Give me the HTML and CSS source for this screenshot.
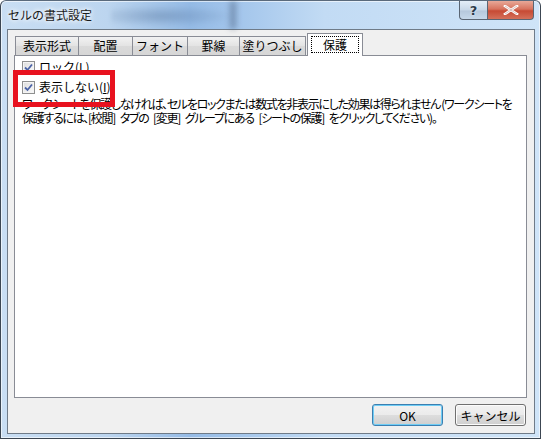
FILE: index.html
```html
<!DOCTYPE html>
<html lang="ja">
<head>
<meta charset="utf-8">
<link rel="stylesheet" href="styles.css">
</head>
<body>
<div class="window">
  <div class="titlebar">
    <div class="blur"></div>
    <span class="title">セルの書式設定</span>
    <div class="caption-btns">
      <div class="cbtn help">?</div>
      <div class="cbtn close">
        <svg width="16" height="10" viewBox="0 0 16 10"><path d="M2 1 L14 9 M14 1 L2 9" stroke="#fff" stroke-width="2.6" stroke-linecap="square"/><path d="M2 1 L14 9 M14 1 L2 9" stroke="#7a2a20" stroke-width="0.6" fill="none" opacity="0.5"/></svg>
      </div>
    </div>
  </div>
  <div class="client">
    <div class="tabs">
      <div class="tab">表示形式</div>
      <div class="tab">配置</div>
      <div class="tab">フォント</div>
      <div class="tab">罫線</div>
      <div class="tab">塗りつぶし</div>
      <div class="tab active"><span class="focus">保護</span></div>
    </div>
    <div class="panel">
      <label class="check"><span class="box"><svg width="9" height="9" viewBox="0 0 9 9"><path d="M1 4.5 L3.5 7 L8 1.5" stroke="#4b63a6" stroke-width="1.8" fill="none"/></svg></span>ロック(<u>L</u>)</label>
      <label class="check"><span class="box"><svg width="9" height="9" viewBox="0 0 9 9"><path d="M1 4.5 L3.5 7 L8 1.5" stroke="#4b63a6" stroke-width="1.8" fill="none"/></svg></span>表示しない(<u>I</u>)</label>
      <p class="note">ワークシートを保護しなければ、セルをロックまたは数式を非表示にした効果は得られません&nbsp;(ワークシートを<br>保護するには、[校閲]&ensp;タブの&ensp;[変更]&ensp;グループにある&ensp;[シートの保護]&ensp;をクリックしてください)。</p>
      <div class="highlight"></div>
    </div>
    <div class="footer">
      <button class="btn default">OK</button>
      <button class="btn">キャンセル</button>
    </div>
  </div>
</div>
</body>
</html>
```
FILE: styles.css
```css
* { box-sizing: border-box; }
html, body { margin: 0; padding: 0; }
body {
  background: #ffffff;
  font-family: "Noto Sans CJK JP", "Noto Sans", sans-serif;
  font-size: 12px;
  color: #000;
  width: 541px;
  height: 444px;
  overflow: hidden;
}
.window {
  width: 541px;
  height: 439px;
  border: 1px solid #3c4652;
  border-top-color: #5a6a7c;
  border-radius: 6px 6px 0 0;
  background: linear-gradient(90deg, #c9def3 0%, #bcd5ef 20%, #95bbe6 35%, #a5c7ec 45%, #c2dbf4 60%, #cfe4f8 100%);
  display: flex;
  flex-direction: column;
  box-shadow: inset 0 0 0 1px rgba(255,255,255,0.6);
}
.titlebar {
  height: 28px;
  display: flex;
  align-items: flex-start;
  position: relative;
}
.blur {
  position: absolute;
  left: 110px;
  top: 4px;
  width: 125px;
  height: 22px;
  background: radial-gradient(ellipse at 40% 50%, rgba(70,100,140,0.35), rgba(70,100,140,0) 70%);
  filter: blur(2px);
}
.blur::after {
  content: "";
  position: absolute;
  right: 0;
  top: -4px;
  width: 6px;
  height: 28px;
  background: rgba(60,80,110,0.45);
  filter: blur(2px);
}
.title {
  position: relative;
  padding: 6px 0 0 7px;
  font-size: 12px;
  line-height: 16px;
  color: #1a1a1a;
  text-shadow: 0 0 6px #fff, 0 0 4px #fff;
}
.caption-btns {
  margin-left: auto;
  margin-right: 6px;
  display: flex;
  position: relative;
}
.cbtn {
  height: 19px;
  border: 1px solid #5a6573;
  border-top: none;
  display: flex;
  align-items: center;
  justify-content: center;
}
.help {
  width: 28px;
  border-radius: 0 0 0 4px;
  border-right: none;
  background: linear-gradient(#e4eef8 0%, #c8d8e8 50%, #b6c8dc 55%, #c6d8ea 100%);
  color: #2a3a4a;
  font-family: "DejaVu Sans", sans-serif;
  font-weight: bold;
  font-size: 13px;
  text-shadow: 0 0 2px #fff;
}
.close {
  width: 47px;
  border-radius: 0 0 4px 0;
  background: linear-gradient(#e8a898 0%, #d7735e 45%, #c74a34 55%, #d4705a 100%);
}
.client {
  margin: 0 5px 0 6px;
  height: 405px;
  background: #f0f0f0;
  border: 1px solid #6f7b88;
  display: flex;
  flex-direction: column;
  padding: 3px 7px 0 6px;
}
.tabs {
  display: flex;
  align-items: flex-end;
  height: 22px;
  padding-left: 1px;
  position: relative;
  z-index: 1;
}
.tab {
  height: 19px;
  padding: 0;
  text-align: center;
  white-space: nowrap;
  border: 1px solid #898c95;
  border-bottom: none;
  border-left: none;
  background: linear-gradient(#f2f2f2, #e3e3e3 50%, #dadada 51%, #d6d6d6);
  font-size: 12px;
  line-height: 18px;
  color: #000;
}
.tab:first-child { border-left: 1px solid #898c95; }
.tab:nth-child(1) { width: 64px; }
.tab:nth-child(2) { width: 54px; }
.tab:nth-child(3) { width: 55px; }
.tab:nth-child(4) { width: 52px; }
.tab:nth-child(5) { width: 66px; }
.tab.active {
  width: 56px;
  margin-left: 1px;
  border-left: 1px solid #898c95;
  background: #fff;
  padding: 2px 3px 0;
  margin-bottom: -1px;
  height: 23px;
}
.focus {
  display: block;
  border: 1px dotted #000;
  line-height: 15px;
  text-align: center;
}
.panel {
  height: 343px;
  background: #fff;
  border: 1px solid #898c95;
  position: relative;
  padding: 1px 0 0 6px;
}
.check {
  display: flex;
  align-items: center;
  height: 20px;
  line-height: 14px;
}
.box {
  width: 13px;
  height: 13px;
  border: 1px solid #8e8f8f;
  background: linear-gradient(135deg, #dcdcdc, #fbfbfb);
  box-shadow: inset 0 0 0 1px #f4f4f4;
  margin: 0 4px 0 1px;
  display: flex;
  align-items: center;
  justify-content: center;
}
.note {
  margin: 0 0 0 1px;
  font-size: 12px;
  line-height: 14px;
  white-space: nowrap;
  font-feature-settings: "palt";
  letter-spacing: -1.3px;
}
.highlight {
  position: absolute;
  left: -2px;
  top: 14px;
  width: 102px;
  height: 37px;
  border: 5px solid #e8121f;
}
.footer {
  display: flex;
  justify-content: flex-end;
  gap: 12px;
  padding: 6px 1px 0 0;
}
.btn {
  width: 71px;
  height: 22px;
  border: 1px solid #707070;
  border-radius: 3px;
  background: linear-gradient(#f2f2f2, #ebebeb 50%, #dddddd 51%, #cfcfcf);
  box-shadow: inset 0 0 0 1px #fcfcfc;
  font-family: "Noto Sans CJK JP", sans-serif;
  font-size: 12px;
  padding: 0;
  color: #000;
}
.btn.default {
  border-color: #3c7fb1;
  box-shadow: inset 0 0 0 1px #6fcdf5;
}
```
